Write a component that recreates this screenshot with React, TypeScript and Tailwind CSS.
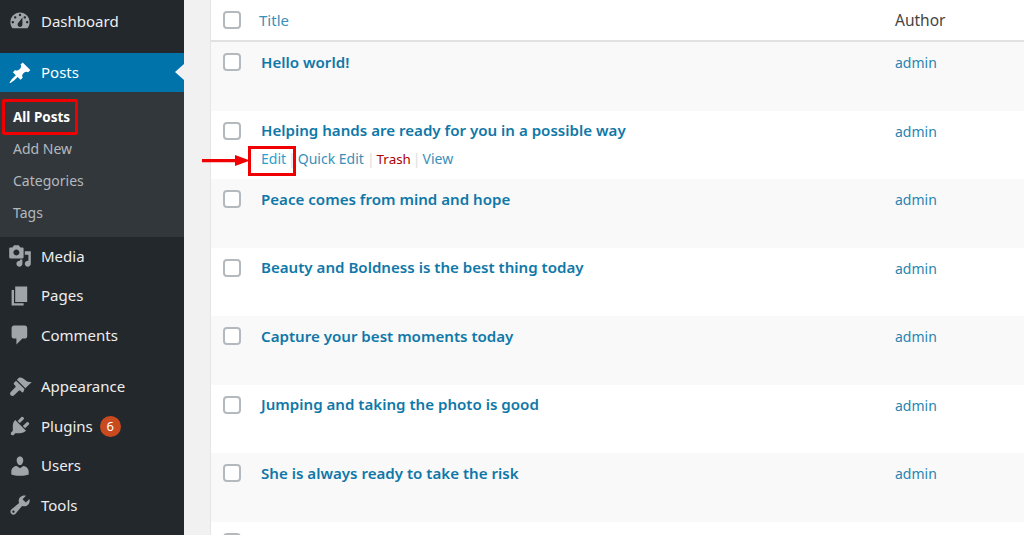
import React from "react";

const font = "font-['Noto_Sans','Open_Sans',sans-serif]";

const icons: Record<string, React.ReactNode> = {
  dashboard: <path fillRule="evenodd" d="M3.76 16h12.48c1.1-1.37 1.76-3.11 1.76-5 0-4.42-3.58-8-8-8s-8 3.58-8 8c0 1.89.66 3.63 1.76 5zM10 4c.55 0 1 .45 1 1s-.45 1-1 1-1-.45-1-1 .45-1 1-1zM6 6c.55 0 1 .45 1 1s-.45 1-1 1-1-.45-1-1 .45-1 1-1zm8 0c.55 0 1 .45 1 1s-.45 1-1 1-1-.45-1-1 .45-1 1-1zm-5.37 5.55L12 7v6c0 1.1-.9 2-2 2s-2-.9-2-2c0-.57.24-1.08.63-1.45zM4 10c.55 0 1 .45 1 1s-.45 1-1 1-1-.45-1-1 .45-1 1-1zm12 0c.55 0 1 .45 1 1s-.45 1-1 1-1-.45-1-1 .45-1 1-1z" />,
  pin: <path d="M10.44 3.02l1.82-1.82 6.36 6.35-1.83 1.82c-1.05-.68-2.48-.57-3.41.36l-.75.75c-.92.93-1.04 2.35-.35 3.41l-1.83 1.82-2.41-2.41-2.8 2.79c-.42.42-3.38 2.71-3.8 2.29s1.86-3.39 2.28-3.81l2.79-2.79L4.1 9.36l1.83-1.82c1.05.69 2.48.57 3.4-.36l.75-.75c.93-.92 1.05-2.35.36-3.41z" />,
  media: <path fillRule="evenodd" d="M13 11V4c0-.55-.45-1-1-1h-1.67L9 1H5L3.67 3H2c-.55 0-1 .45-1 1v7c0 .55.45 1 1 1h10c.55 0 1-.45 1-1zM7 4.5c1.38 0 2.5 1.12 2.5 2.5S8.38 9.5 7 9.5 4.5 8.38 4.5 7 5.62 4.5 7 4.5zM14 6h5v10.5c0 1.38-1.12 2.5-2.5 2.5S14 17.88 14 16.5s1.12-2.5 2.5-2.5c.17 0 .34.02.5.05V9h-3V6zm-4 8.05V13h2v3.5c0 1.38-1.12 2.5-2.5 2.5S7 17.88 7 16.5 8.12 14 9.5 14c.17 0 .34.02.5.05z" />,
  pages: <path d="M6 15V2h10v13H6zm-1 1h8v2H3V5h2v11z" />,
  comments: <path d="M5 2h9c1.1 0 2 .9 2 2v7c0 1.1-.9 2-2 2h-2l-5 5v-5H5c-1.1 0-2-.9-2-2V4c0-1.1.9-2 2-2z" />,
  appearance: <path d="M14.48 11.06L7.41 3.99l1.5-1.5c.5-.56 2.3-.47 3.51.32 1.21.8 1.43 1.28 2.91 2.1 1.18.64 2.45 1.26 4.45.85zm-.71.71L6.7 4.77 5.05 6.43c-.39.39-.39 1.02 0 1.41l1.06 1.06c.39.39.39 1.02 0 1.41L2.3 14.1c-.78.78-.78 2.05 0 2.83s2.05.78 2.83 0l3.8-3.8c.39-.39 1.02-.39 1.41 0l1.06 1.06c.39.39 1.02.39 1.41 0z" />,
  plugins: <path d="M13.11 4.36L9.87 7.6 8 5.73l3.24-3.24c.35-.34 1.05-.2 1.56.32.52.51.66 1.21.31 1.55zm-8 1.77l.91-1.12 9.01 9.01-1.19.84c-.71.71-2.63 1.16-3.82 1.16H6.14L4.9 17.26c-.59.59-1.54.59-2.12 0-.59-.58-.59-1.53 0-2.12l1.24-1.24v-3.88c0-1.13.4-3.19 1.09-3.89zm7.26 3.97l3.24-3.24c.34-.35 1.04-.21 1.55.31.52.51.66 1.21.31 1.55l-3.24 3.25z" />,
  users: <path d="M10 9.25c-2.27 0-2.73-3.44-2.73-3.44C7 4.02 7.82 2 9.97 2c2.16 0 2.98 2.02 2.71 3.81 0 0-.41 3.44-2.68 3.44zm0 2.57L12.72 10c2.39 0 4.52 2.33 4.52 4.53v2.49s-3.65 1.13-7.24 1.13c-3.65 0-7.24-1.13-7.24-1.13v-2.49c0-2.25 1.94-4.48 4.47-4.48z" />,
  tools: <path fillRule="evenodd" d="M16.68 9.77c-1.34 1.34-3.3 1.67-4.95.99l-5.41 6.52c-.99.99-2.59.99-3.58 0s-.99-2.59 0-3.57l6.52-5.42c-.68-1.65-.35-3.61.99-4.95 1.28-1.28 3.12-1.62 4.72-1.06l-2.89 2.89 2.82 2.82 2.89-2.89c.55 1.6.22 3.44-1.11 4.67zM3.81 16.21c.4.39 1.04.39 1.43 0 .4-.4.4-1.04 0-1.43-.39-.4-1.03-.4-1.43 0-.39.39-.39 1.03 0 1.43z" />,
};

const MenuItem = ({ icon, label, badge }: { icon: string; label: string; badge?: string }) => (
  <div className="flex h-[39.5px] items-center text-[15px] text-[#eeeeee]">
    <svg viewBox="0 0 20 20" className="ml-2 h-6 w-6 shrink-0 fill-[#a0a5aa]">{icons[icon]}</svg>
    <span className="-mt-[1px] ml-[9px]">{label}</span>
    {badge && (
      <span className="ml-[7px] flex h-[21px] w-[21px] items-center justify-center rounded-full bg-[#ca4a1f] text-[13px] text-white">
        {badge}
      </span>
    )}
  </div>
);

const Sidebar = () => (
  <aside className="flex h-full w-[184px] shrink-0 flex-col bg-[#23282d]">
    <div className="mb-[12px] mt-[1.5px]">
      <MenuItem icon="dashboard" label="Dashboard" />
    </div>
    <div className="relative flex h-[39px] items-center bg-[#0073aa] text-[15px] text-white">
      <svg viewBox="0 0 20 20" className="ml-2 h-6 w-6 shrink-0 fill-white">{icons.pin}</svg>
      <span className="ml-[9px]">Posts</span>
      <span className="absolute right-0 top-[11px] h-0 w-0 border-y-[8px] border-r-[9px] border-y-transparent border-r-[#f1f1f1]" />
    </div>
    <div className="flex h-[144.5px] flex-col justify-center bg-[#32373c] pl-[13px] text-[14px] text-[#b4b9be]">
      <div className="flex h-8 items-center pt-[2px] text-[13.5px] font-bold text-white">All Posts</div>
      <div className="flex h-8 items-center">Add New</div>
      <div className="flex h-8 items-center">Categories</div>
      <div className="flex h-8 items-center">Tags</div>
    </div>
    <MenuItem icon="media" label="Media" />
    <MenuItem icon="pages" label="Pages" />
    <MenuItem icon="comments" label="Comments" />
    <div className="h-[12px]" />
    <MenuItem icon="appearance" label="Appearance" />
    <MenuItem icon="plugins" label="Plugins" badge="6" />
    <MenuItem icon="users" label="Users" />
    <MenuItem icon="tools" label="Tools" />
  </aside>
);

const Checkbox = () => (
  <span className="block h-[18px] w-[18px] shrink-0 rounded-[4px] border-2 border-[#b4b9be] bg-white" />
);

const posts = [
  { title: "Hello world!", author: "admin" },
  { title: "Helping hands are ready for you in a possible way", author: "admin", hover: true },
  { title: "Peace comes from mind and hope", author: "admin" },
  { title: "Beauty and Boldness is the best thing today", author: "admin" },
  { title: "Capture your best moments today", author: "admin" },
  { title: "Jumping and taking the photo is good", author: "admin" },
  { title: "She is always ready to take the risk", author: "admin" },
  { title: "Consider the flow of your own life" },
];

const Row = ({ title, author, hover, alt }: { title: string; author?: string; hover?: boolean; alt: boolean }) => (
  <div className={`flex h-[68.5px] shrink-0 pl-3 pt-[11px] ${alt ? "bg-[#f9f9f9]" : "bg-white"}`}>
    <Checkbox />
    <div className="ml-[20px] w-[634px]">
      <div className="mt-[0.3px] flex h-[18px] items-center text-[15.1px] font-semibold text-[#0f78a8]">{title}</div>
      {hover && (
        <div className="mt-[10px] flex h-[18px] items-center text-[14px] text-[#3a8fb7]">
          <span className="text-[#2b9fd0]">Edit</span>
          <span className="mx-[2px] text-[#dddddd]">|</span>
          <span>Quick Edit</span>
          <span className="ml-[3px] mr-[2px] text-[#dddddd]">|</span>
          <span className="text-[13.4px] text-[#a00]">Trash</span>
          <span className="mx-[2px] text-[#dddddd]">|</span>
          <span>View</span>
        </div>
      )}
    </div>
    {author && <div className="mt-[0.7px] flex h-[18px] items-center text-[14px] text-[#2a85b0]">{author}</div>}
  </div>
);

export default function App() {
  return (
    <div className={`relative flex h-[535px] w-[1024px] overflow-hidden bg-[#f1f1f1] ${font}`}>
      <Sidebar />
      <main className="ml-[26px] flex min-w-0 flex-1 flex-col border-l border-[#e5e5e5]">
        <div className="flex h-[42px] shrink-0 items-center border-b-2 border-[#e1e1e1] bg-white pl-3 pb-[1px]">
          <Checkbox />
          <div className="ml-[18px] mt-[1px] w-[636px] text-[15px] text-[#3a8fb7]">Title</div>
          <div className="mt-[2px] text-[15.5px] text-[#444444]">Author</div>
        </div>
        {posts.map((post, i) => (
          <Row key={post.title} title={post.title} author={post.author} hover={post.hover} alt={i % 2 === 0} />
        ))}
      </main>

      {/* red annotations */}
      <div className="absolute left-[2px] top-[99px] h-[36px] w-[76px] rounded-[2px] border-[3px] border-[#f00000]" />
      <div className="absolute left-[248px] top-[146px] h-[30px] w-[48px] border-[3px] border-[#f00000]" />
      <svg viewBox="0 0 48 14" className="absolute left-[202px] top-[153px] h-[14px] w-[48px]">
        <path d="M0 6h33V2l15 5.5L33 13V9.2H0z" fill="#f00000" />
      </svg>
    </div>
  );
}
